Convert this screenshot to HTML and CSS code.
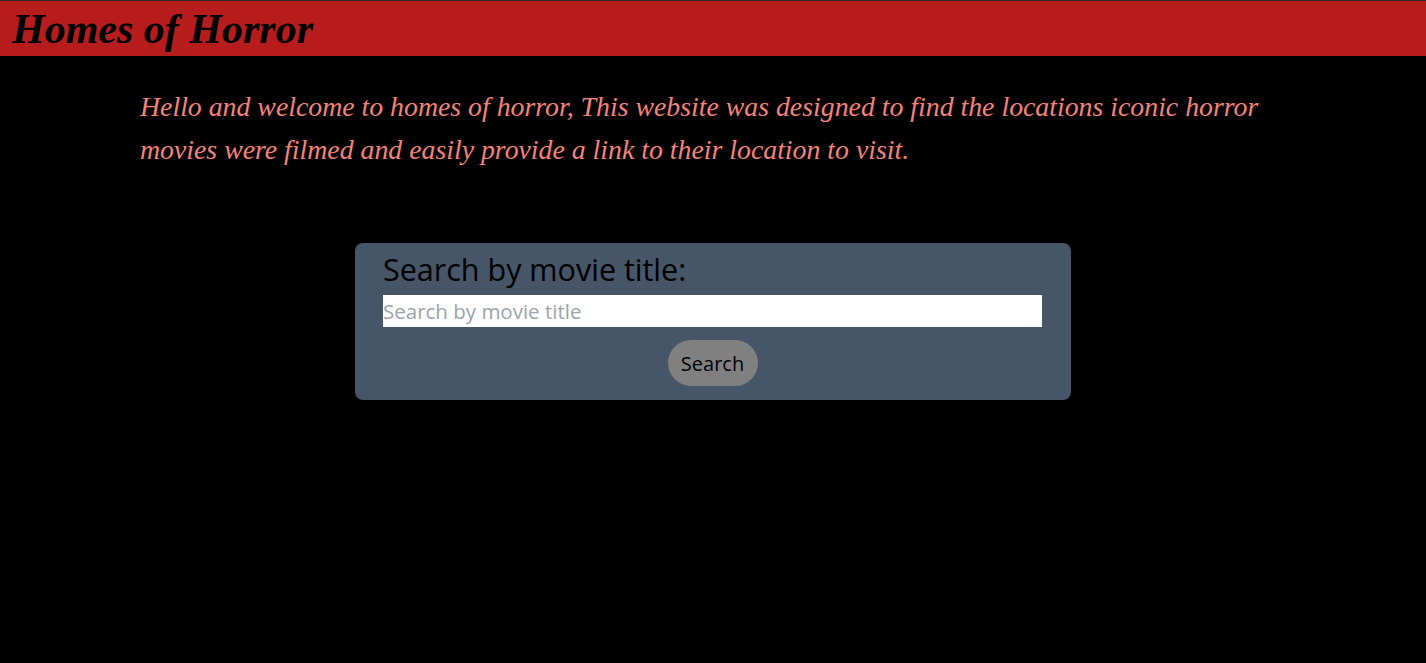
FILE: index.html
```html
<!DOCTYPE html>
<html>
<head>
<meta charset="utf-8">
<link rel="stylesheet" href="styles.css">
</head>
<body>
<header class="topbar">
  <h1 class="site-title">Homes of Horror</h1>
</header>
<main class="content">
  <p class="intro">Hello and welcome to homes of horror, This website was designed to find the locations iconic horror movies were filmed and easily provide a link to their location to visit.</p>
  <section class="search-card">
    <h2 class="search-label">Search by movie title:</h2>
    <input class="search-input" type="text" placeholder="Search by movie title">
    <button class="search-btn">Search</button>
  </section>
</main>
</body>
</html>
```
FILE: styles.css
```css
html, body {
  margin: 0;
  padding: 0;
  background: #000;
  height: 100%;
}
.topbar {
  background: #b71c1c;
  border-top: 1px solid #2a2a2a;
  height: 55px;
  display: flex;
  align-items: center;
  padding-left: 12px;
}
.site-title {
  margin: 0;
  font-family: "Liberation Serif", serif;
  font-style: italic;
  font-weight: bold;
  font-size: 42px;
  color: #000;
}
.content {
  padding: 0 140px;
}
.intro {
  margin: 29px 0 0;
  font-family: "Liberation Serif", serif;
  font-style: italic;
  font-size: 27.8px;
  line-height: 43px;
  color: #f58378;
}
.search-card {
  width: 716px;
  margin: 72px auto 0;
  box-sizing: border-box;
  background: #475569;
  border-radius: 8px;
  padding: 6px 29px 14px 28px;
  display: flex;
  flex-direction: column;
  align-items: center;
  font-family: "Open Sans", sans-serif;
}
.search-label {
  align-self: stretch;
  margin: 0;
  font-weight: normal;
  font-size: 30.5px;
  line-height: 40px;
  color: #000;
}
.search-input {
  align-self: stretch;
  margin-top: 6px;
  height: 32px;
  box-sizing: border-box;
  border: none;
  padding: 0;
  font-family: "Open Sans", sans-serif;
  font-size: 20.5px;
  outline: none;
}
.search-input::placeholder {
  color: #9ca3af;
}
.search-btn {
  margin-top: 13px;
  width: 90px;
  height: 46px;
  border: none;
  border-radius: 23px;
  background: #808080;
  font-family: "Open Sans", sans-serif;
  font-size: 20px;
  color: #000;
  padding: 0;
}
```
